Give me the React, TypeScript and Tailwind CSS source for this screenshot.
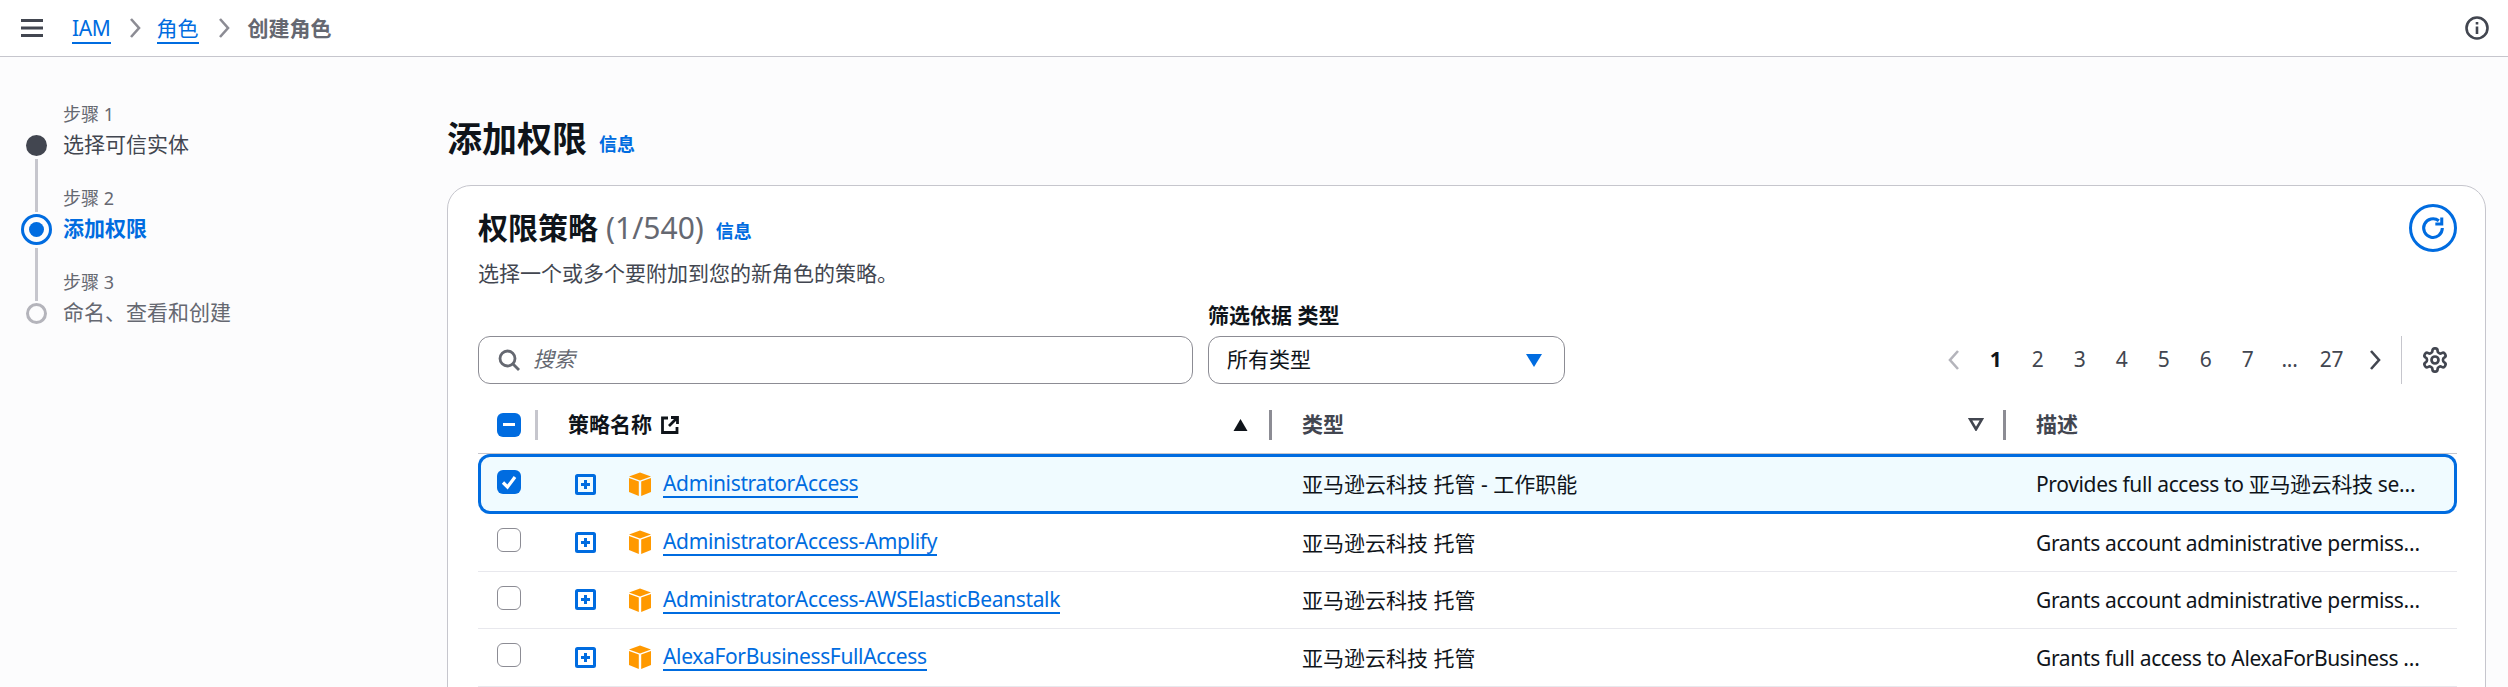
import React from "react";

const font = { fontFamily: '"Noto Sans", "Noto Sans CJK SC", sans-serif' };

function Chevron({ className = "" }: { className?: string }) {
  return (
    <svg viewBox="0 0 12 20" className={className} fill="none" stroke="currentColor" strokeWidth="2.6">
      <path d="M2 1l8 9-8 9" />
    </svg>
  );
}

function Cube() {
  return (
    <svg viewBox="0 0 24 24" className="w-[24px] h-[24px] shrink-0">
      <path d="M12 0.5L23 4.5L12 8.5L1 4.5Z" fill="#ff9900" />
      <path d="M1 6L10.8 9.6V24L1 20Z" fill="#ff9900" />
      <path d="M23 6L13.2 9.6V24L23 20Z" fill="#ff9900" />
    </svg>
  );
}

function Expand() {
  return (
    <svg viewBox="0 0 21 21" className="w-[21px] h-[21px] shrink-0" fill="none" stroke="#006ce0">
      <rect x="1.5" y="1.5" width="18" height="18" rx="1" strokeWidth="3" />
      <path d="M6 10.5h9M10.5 6v9" strokeWidth="3" />
    </svg>
  );
}

function Check({ on }: { on: boolean }) {
  return on ? (
    <span className="w-[24px] h-[24px] rounded-[6px] bg-[#006ce0] flex items-center justify-center">
      <svg viewBox="0 0 24 24" className="w-[24px] h-[24px]" fill="none" stroke="#fff" strokeWidth="3.2">
        <path d="M6 12.5l4.5 4.5L18 7" />
      </svg>
    </span>
  ) : (
    <span className="w-[24px] h-[24px] rounded-[6px] bg-white border-[1.5px] border-[#8c8c94]" />
  );
}

const rows = [
  { name: "AdministratorAccess", type: "亚马逊云科技 托管 - 工作职能", desc: "Provides full access to 亚马逊云科技 services and resources.", on: true },
  { name: "AdministratorAccess-Amplify", type: "亚马逊云科技 托管", desc: "Grants account administrative permissions while explicitly allowing", on: false },
  { name: "AdministratorAccess-AWSElasticBeanstalk", type: "亚马逊云科技 托管", desc: "Grants account administrative permissions. Explicitly allows developers", on: false },
  { name: "AlexaForBusinessFullAccess", type: "亚马逊云科技 托管", desc: "Grants full access to AlexaForBusiness resources and access to related", on: false },
];

const pages = ["1", "2", "3", "4", "5", "6", "7", "...", "27"];

const Sep = () => <span className="w-[3px] h-[30px] bg-[#8c8c94] shrink-0" />;

export default function App() {
  return (
    <div style={font} className="h-[687px] overflow-hidden bg-[#fcfcfd] text-[#0f141a] text-[21px]">
      <header className="h-[57px] bg-white border-b border-[#c6c6cd] flex items-center pl-[21px] pr-[19px]">
        <svg viewBox="0 0 22 18" className="w-[22px] h-[18px] mr-[29px]" fill="#424650">
          <rect y="0" width="22" height="3" />
          <rect y="7.5" width="22" height="3" />
          <rect y="15" width="22" height="3" />
        </svg>
        <a className="text-[#006ce0] border-b-2 border-[#006ce0] leading-[28px] mt-[1px] tracking-[-0.35px]">IAM</a>
        <Chevron className="w-[12px] h-[20px] text-[#8c8c94] ml-[18px] mr-[16px]" />
        <a className="text-[#006ce0] border-b-2 border-[#006ce0] leading-[28px] mt-[1px]">角色</a>
        <Chevron className="w-[12px] h-[20px] text-[#8c8c94] ml-[19px] mr-[18px]" />
        <span className="font-bold text-[#656871] leading-[28px]">创建角色</span>
        <svg viewBox="0 0 24 24" className="w-[24px] h-[24px] ml-auto" fill="none" stroke="#424650" strokeWidth="2.6">
          <circle cx="12" cy="12" r="10.5" />
          <path d="M12 10.5V18M12 6v2.6" />
        </svg>
      </header>

      <div className="flex">
        <aside className="w-[447px] shrink-0 flex pl-[21px] pt-[42px]">
          <div className="w-[31px] flex flex-col items-center shrink-0 pt-[36px]">
            <span className="w-[21px] h-[21px] rounded-full bg-[#424650]" />
            <span className="w-[3px] h-[53px] mt-[3px] mb-[2px] bg-[#c6c6cd]" />
            <span className="w-[31px] h-[31px] rounded-full border-[3px] border-[#006ce0] flex items-center justify-center">
              <span className="w-[15px] h-[15px] rounded-full bg-[#006ce0]" />
            </span>
            <span className="w-[3px] h-[53px] mt-[3px] mb-[2px] bg-[#c6c6cd]" />
            <span className="w-[21px] h-[21px] rounded-full border-[3px] border-[#b4b4bb]" />
          </div>
          <div className="ml-[11px] flex flex-col">
            <div className="h-[84px]">
              <div className="text-[18px] leading-[30px] text-[#656871]">步骤 1</div>
              <div className="leading-[30px] text-[#424650]">选择可信实体</div>
            </div>
            <div className="h-[84px]">
              <div className="text-[18px] leading-[30px] text-[#656871]">步骤 2</div>
              <div className="leading-[30px] font-bold text-[#006ce0]">添加权限</div>
            </div>
            <div className="h-[84px]">
              <div className="text-[18px] leading-[30px] text-[#656871]">步骤 3</div>
              <div className="leading-[30px] text-[#656871]">命名、查看和创建</div>
            </div>
          </div>
        </aside>

        <main className="flex-1 min-w-0 pr-[22px] pt-[59px]">
          <div className="flex items-center h-[46px] mb-[23px]">
            <h1 className="text-[35px] leading-[46px] font-bold">添加权限</h1>
            <a className="text-[18px] font-bold text-[#006ce0] ml-[12px] mt-[10px]">信息</a>
          </div>

          <section className="bg-white border border-[#c6c6cd] rounded-[24px] pl-[30px] pr-[28px] pt-[18px] pb-[40px]">
            <div className="flex items-start justify-between">
              <div className="flex items-center h-[48px]">
                <h2 className="text-[30px] leading-[48px] font-bold">权限策略</h2>
                <span className="text-[30px] leading-[48px] text-[#656871] ml-[8px]">(1/540)</span>
                <a className="text-[18px] font-bold text-[#006ce0] ml-[12px] mt-[7px]">信息</a>
              </div>
              <button className="w-[48px] h-[48px] rounded-full border-[3px] border-[#006ce0] flex items-center justify-center">
                <svg viewBox="0 0 24 24" className="w-[28px] h-[28px]" fill="none" stroke="#006ce0" strokeWidth="2.6">
                  <path d="M20 12a8 8 0 1 1-3-6.2" />
                  <path d="M19.5 3v5.5H14" />
                </svg>
              </button>
            </div>
            <p className="leading-[30px] text-[#424650] mt-[6px]">选择一个或多个要附加到您的新角色的策略。</p>

            <div className="flex items-end mt-[12px]">
              <label className="w-[715px] h-[48px] rounded-[12px] border-[1.5px] border-[#8c8c94] flex items-center pl-[19px]">
                <svg viewBox="0 0 22 22" className="w-[22px] h-[22px]" fill="none" stroke="#656871" strokeWidth="2.8">
                  <circle cx="9.5" cy="9.5" r="7.5" />
                  <path d="M15 15l6 6" />
                </svg>
                <span className="italic text-[#656871] ml-[13px]">搜索</span>
              </label>
              <div className="ml-[15px] w-[357px]">
                <div className="font-bold leading-[30px] mb-[6px]">筛选依据 类型</div>
                <div className="h-[48px] rounded-[12px] border-[1.5px] border-[#8c8c94] flex items-center justify-between pl-[18px] pr-[22px]">
                  <span className="text-[#0f141a]">所有类型</span>
                  <svg viewBox="0 0 16 13" className="w-[16px] h-[13px]" fill="#006ce0">
                    <path d="M0 0h16L8 13z" />
                  </svg>
                </div>
              </div>
              <div className="flex-1 flex items-center justify-end h-[48px]">
                <div className="w-[42px] flex justify-center">
                  <Chevron className="w-[12px] h-[20px] rotate-180 text-[#b4b4bb]" />
                </div>
                {pages.map((p, i) => (
                  <span key={p} className={`w-[42px] text-center tracking-[-0.35px] ${i === 0 ? "font-bold text-[#0f141a]" : "text-[#424650]"}`}>
                    {p}
                  </span>
                ))}
                <div className="w-[42px] flex justify-center pl-[2px]">
                  <Chevron className="w-[12px] h-[20px] text-[#424650]" />
                </div>
                <span className="w-[1.5px] h-[48px] bg-[#c6c6cd] ml-[6px]" />
                <div className="w-[55px] flex justify-start pl-[19px]">
                  <svg viewBox="0 0 24 24" className="w-[28px] h-[28px]" fill="none" stroke="#424650" strokeWidth="2.3" strokeLinejoin="round">
                    <circle cx="12" cy="12" r="3" />
                    <path d="M12.22 2h-.44a2 2 0 0 0-2 2v.18a2 2 0 0 1-1 1.73l-.43.25a2 2 0 0 1-2 0l-.15-.08a2 2 0 0 0-2.73.73l-.22.38a2 2 0 0 0 .73 2.73l.15.1a2 2 0 0 1 1 1.72v.51a2 2 0 0 1-1 1.74l-.15.09a2 2 0 0 0-.73 2.73l.22.38a2 2 0 0 0 2.73.73l.15-.08a2 2 0 0 1 2 0l.43.25a2 2 0 0 1 1 1.73V20a2 2 0 0 0 2 2h.44a2 2 0 0 0 2-2v-.18a2 2 0 0 1 1-1.73l.43-.25a2 2 0 0 1 2 0l.15.08a2 2 0 0 0 2.73-.73l.22-.39a2 2 0 0 0-.73-2.73l-.15-.08a2 2 0 0 1-1-1.74v-.5a2 2 0 0 1 1-1.74l.15-.09a2 2 0 0 0 .73-2.73l-.22-.38a2 2 0 0 0-2.73-.73l-.15.08a2 2 0 0 1-2 0l-.43-.25a2 2 0 0 1-1-1.73V4a2 2 0 0 0-2-2z" />
                  </svg>
                </div>
              </div>
            </div>

            <div className="grid grid-cols-[90px_734px_734px_1fr] h-[54px] mt-[16px] pb-[4px] border-b border-[#c6c6cd] items-center font-bold text-[#424650]">
              <div className="flex items-center pl-[19px]">
                <span className="w-[24px] h-[24px] rounded-[6px] bg-[#006ce0] flex items-center justify-center">
                  <span className="w-[12px] h-[3px] bg-white" />
                </span>
                <span className="w-[3px] h-[30px] bg-[#c6c6cd] ml-[14px]" />
              </div>
              <div className="flex items-center pr-[30px]">
                <span className="text-[#0f141a]">策略名称</span>
                <svg viewBox="0 0 18 18" className="w-[18px] h-[18px] ml-[9px]" fill="none" stroke="#0f141a" strokeWidth="2.8">
                  <path d="M7 2H1.5v14.5H16V11M10 1.5h6.5V8M16.5 1.5L8 10" />
                </svg>
                <svg viewBox="0 0 14 12" className="w-[15px] h-[12px] ml-auto mr-[21px]" fill="#0f141a">
                  <path d="M7 0l7 12H0z" />
                </svg>
                <Sep />
              </div>
              <div className="flex items-center pr-[30px]">
                <span>类型</span>
                <svg viewBox="0 0 14 12" className="w-[16px] h-[13px] ml-auto mr-[19px]" fill="none" stroke="#424650" strokeWidth="2.4">
                  <path d="M1.6 1.2h10.8L7 10.4z" />
                </svg>
                <Sep />
              </div>
              <div className="flex items-center">
                <span>描述</span>
                <span className="ml-auto"><Sep /></span>
              </div>
            </div>

            {rows.map((r) => (
              <div
                key={r.name}
                className={`grid grid-cols-[90px_734px_734px_1fr] items-center ${
                  r.on
                    ? "h-[60px] bg-[#f0fbff] rounded-[12px] shadow-[inset_0_0_0_3px_#006ce0]"
                    : "h-[57.5px] border-b-[1.5px] border-[#e8e8ed]"
                }`}
              >
                <div className="flex items-center pl-[19px] -mt-[4px]">
                  <Check on={r.on} />
                </div>
                <div className="flex items-center ml-[7px] min-w-0">
                  <Expand />
                  <span className="ml-[32px]"><Cube /></span>
                  <a className="ml-[11px] text-[#006ce0] border-b-2 border-[#006ce0] leading-[26px] tracking-[-0.35px]">{r.name}</a>
                </div>
                <div className="mt-[2px]">{r.type}</div>
                <div className="mt-[2px] truncate pr-[36px] tracking-[-0.35px]">{r.desc}</div>
              </div>
            ))}
          </section>
        </main>
      </div>
    </div>
  );
}
